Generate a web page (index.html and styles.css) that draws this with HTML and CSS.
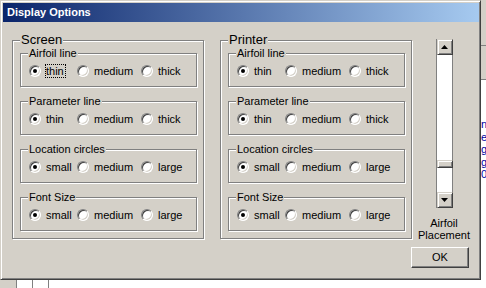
FILE: index.html
```html
<!DOCTYPE html>
<html>
<head>
<meta charset="utf-8">
<link rel="stylesheet" href="styles.css">
</head>
<body>
<div class="screen">
  <div class="dialog">
    <div class="titlebar">Display Options</div>
    <div class="dlg-body">
      <div class="group outer">
        <div class="legend big">Screen</div>
        <div class="group inner">
          <div class="legend">Airfoil line</div>
          <div class="options">
            <div class="opt"><span class="radio on"></span><span class="txt focus">thin</span></div>
            <div class="opt"><span class="radio"></span><span class="txt">medium</span></div>
            <div class="opt"><span class="radio"></span><span class="txt">thick</span></div>
          </div>
        </div>
        <div class="group inner">
          <div class="legend">Parameter line</div>
          <div class="options">
            <div class="opt"><span class="radio on"></span><span class="txt">thin</span></div>
            <div class="opt"><span class="radio"></span><span class="txt">medium</span></div>
            <div class="opt"><span class="radio"></span><span class="txt">thick</span></div>
          </div>
        </div>
        <div class="group inner">
          <div class="legend">Location circles</div>
          <div class="options">
            <div class="opt"><span class="radio on"></span><span class="txt">small</span></div>
            <div class="opt"><span class="radio"></span><span class="txt">medium</span></div>
            <div class="opt"><span class="radio"></span><span class="txt">large</span></div>
          </div>
        </div>
        <div class="group inner">
          <div class="legend">Font Size</div>
          <div class="options">
            <div class="opt"><span class="radio on"></span><span class="txt">small</span></div>
            <div class="opt"><span class="radio"></span><span class="txt">medium</span></div>
            <div class="opt"><span class="radio"></span><span class="txt">large</span></div>
          </div>
        </div>
      </div>
      <div class="group outer">
        <div class="legend big">Printer</div>
        <div class="group inner">
          <div class="legend">Airfoil line</div>
          <div class="options">
            <div class="opt"><span class="radio on"></span><span class="txt">thin</span></div>
            <div class="opt"><span class="radio"></span><span class="txt">medium</span></div>
            <div class="opt"><span class="radio"></span><span class="txt">thick</span></div>
          </div>
        </div>
        <div class="group inner">
          <div class="legend">Parameter line</div>
          <div class="options">
            <div class="opt"><span class="radio on"></span><span class="txt">thin</span></div>
            <div class="opt"><span class="radio"></span><span class="txt">medium</span></div>
            <div class="opt"><span class="radio"></span><span class="txt">thick</span></div>
          </div>
        </div>
        <div class="group inner">
          <div class="legend">Location circles</div>
          <div class="options">
            <div class="opt"><span class="radio on"></span><span class="txt">small</span></div>
            <div class="opt"><span class="radio"></span><span class="txt">medium</span></div>
            <div class="opt"><span class="radio"></span><span class="txt">large</span></div>
          </div>
        </div>
        <div class="group inner">
          <div class="legend">Font Size</div>
          <div class="options">
            <div class="opt"><span class="radio on"></span><span class="txt">small</span></div>
            <div class="opt"><span class="radio"></span><span class="txt">medium</span></div>
            <div class="opt"><span class="radio"></span><span class="txt">large</span></div>
          </div>
        </div>
      </div>
      <div class="side">
        <div class="placement">
          <div class="scrollbar">
            <div class="sbtn"><svg width="7" height="4" viewBox="0 0 7 4"><polygon points="3.5,0 7,4 0,4" fill="#000"/></svg></div>
            <div class="track"><div class="thumb"></div></div>
            <div class="sbtn"><svg width="7" height="4" viewBox="0 0 7 4"><polygon points="0,0 7,0 3.5,4" fill="#000"/></svg></div>
          </div>
          <div class="plabel">Airfoil<br>Placement</div>
        </div>
        <div class="okbtn">OK</div>
      </div>
    </div>
  </div>
  <div class="rstrip">
    <div class="rs-top"></div>
    <div class="rs-mid"></div>
    <div class="rs-text">
      <span>n</span>
      <span>e</span>
      <span class="u">g</span>
      <span class="u">g</span>
      <span>0</span>
    </div>
  </div>
  <div class="bstrip">
    <div class="bs-gray"></div>
    <div class="bs-cell"></div>
    <div class="bs-cell"></div>
    <div class="bs-rest"></div>
  </div>
</div>
</body>
</html>
```
FILE: styles.css
```css
body {
  margin: 0;
  background: #fff;
  font-family: "Liberation Sans", Arial, sans-serif;
  font-size: 11px;
  color: #000;
}

.screen {
  display: grid;
  grid-template-columns: 481px 5px;
  grid-template-rows: 280px 8px;
  width: 486px;
  height: 288px;
  overflow: hidden;
}

.dialog {
  box-sizing: border-box;
  background: #D4D0C8;
  border: 1px solid;
  border-color: #D4D0C8 #404040 #404040 #D4D0C8;
  box-shadow: inset 1px 1px #fff, inset -1px -1px #808080;
  padding: 2px 1px 0 2px;
  display: flex;
  flex-direction: column;
}

.titlebar {
  height: 19px;
  line-height: 19px;
  background: linear-gradient(to right, #0A246A, #A6CAF0);
  color: #fff;
  font-weight: bold;
  font-size: 11px;
  padding-left: 4px;
}

.dlg-body {
  display: flex;
  align-items: flex-start;
  padding-left: 9px;
}

.group {
  box-sizing: border-box;
  border: 1px solid #808080;
  box-shadow: inset 1px 1px #fff, 1px 1px #fff;
}

.outer {
  width: 192px;
  height: 199px;
  margin-top: 18px;
  padding: 0 6px 0 7px;
}

.outer + .outer {
  margin-left: 16px;
}

.legend {
  width: fit-content;
  background: #D4D0C8;
  padding: 0 1px;
  line-height: 13px;
  margin: -7px 0 0 7px;
}

.legend.big {
  font-size: 13px;
  line-height: 15px;
  margin: -9px 0 6px 0;
}

.inner {
  height: 34px;
}

.inner + .inner {
  margin-top: 14px;
}

.options {
  display: flex;
  align-items: center;
  height: 14px;
  margin-top: 4px;
  padding-left: 8px;
}

.opt {
  display: flex;
  align-items: center;
  gap: 5px;
  line-height: 14px;
}

.opt:nth-child(1) { width: 48px; }
.opt:nth-child(2) { width: 64px; }

.radio {
  box-sizing: border-box;
  width: 12px;
  height: 12px;
  flex: none;
  border-radius: 50%;
  border: 1px solid;
  border-color: #808080 #fff #fff #808080;
  background: #fff;
  box-shadow: inset 1px 1px #404040, inset -1px -1px #D4D0C8;
  position: relative;
}

.radio.on::after {
  content: "";
  position: absolute;
  left: 3px;
  top: 3px;
  width: 4px;
  height: 4px;
  border-radius: 50%;
  background: #000;
}

.txt.focus {
  border: 1px dotted #000;
  line-height: 12px;
  margin-left: -1px;
  padding-right: 1px;
}

.side {
  width: 58px;
  margin-left: -1px;
  margin-top: 17px;
  display: flex;
  flex-direction: column;
}

.placement {
  padding-left: 8px;
  display: flex;
  flex-direction: column;
  align-items: center;
}

.scrollbar {
  box-sizing: border-box;
  width: 17px;
  height: 169px;
  border-left: 1px solid #808080;
  display: flex;
  flex-direction: column;
}

.sbtn {
  box-sizing: border-box;
  height: 16px;
  flex: none;
  border: 1px solid;
  border-color: #D4D0C8 #404040 #404040 #D4D0C8;
  box-shadow: inset 1px 1px #fff, inset -1px -1px #808080;
  background: #D4D0C8;
  display: flex;
  align-items: center;
  justify-content: center;
}

.track {
  flex: 1;
  background: #fff;
  box-shadow: inset -1px 0 #808080;
}

.thumb {
  box-sizing: border-box;
  height: 8px;
  margin-top: 105px;
  border: 1px solid;
  border-color: #D4D0C8 #404040 #404040 #D4D0C8;
  box-shadow: inset 1px 1px #fff, inset -1px -1px #808080;
  background: #D4D0C8;
}

.plabel {
  margin-top: 9px;
  text-align: center;
  line-height: 12px;
}

.okbtn {
  box-sizing: border-box;
  height: 21px;
  margin-top: 6px;
  border: 1px solid;
  border-color: #fff #404040 #404040 #fff;
  box-shadow: inset -1px -1px #808080;
  text-align: center;
  line-height: 19px;
}

.rstrip {
  display: flex;
  flex-direction: column;
  background: #fff;
  overflow: hidden;
}

.rs-top {
  height: 45px;
  background: #D4D0C8;
  border-bottom: 1px solid #808080;
}

.rs-mid {
  height: 33px;
  background: #D4D0C8;
  border-bottom: 1px solid #808080;
}

.rs-text {
  display: flex;
  flex-direction: column;
  padding-top: 38px;
  color: #0000A0;
  line-height: 12.5px;
  font-size: 11px;
}

.rs-text .u {
  text-decoration: underline;
}

.bstrip {
  grid-column: 1 / 3;
  display: flex;
}

.bs-gray {
  width: 16px;
  background: #D4D0C8;
  border-right: 1px solid #808080;
}

.bs-cell {
  width: 15px;
  background: #fff;
  border-right: 1px solid #808080;
}

.bs-rest {
  flex: 1;
  background: #fff;
}
```
